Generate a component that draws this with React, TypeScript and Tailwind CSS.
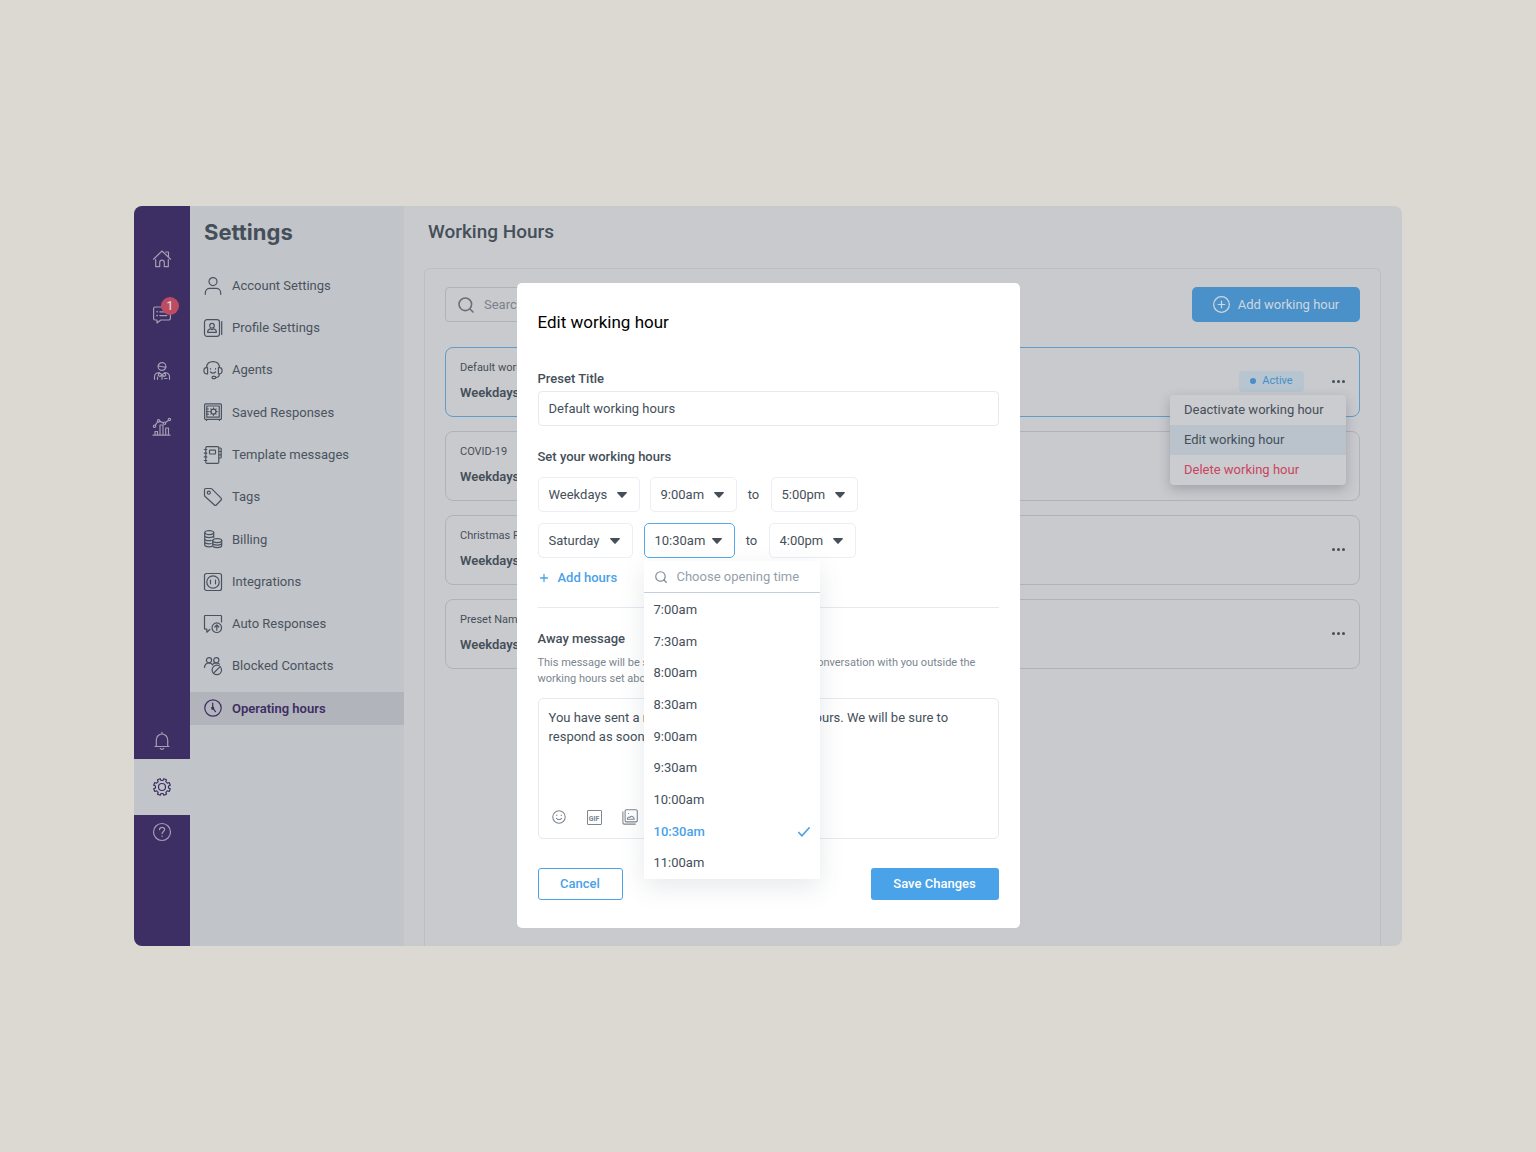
import React from "react";

type IconProps = { children: React.ReactNode; size?: string; box?: string; width?: number };

function Icon({ children, size = "size-[18px]", box = "0 0 18 18", width = 1 }: IconProps) {
  return (
    <svg
      className={size + " shrink-0 overflow-visible"}
      viewBox={box}
      fill="none"
      stroke="currentColor"
      strokeWidth={width}
      strokeLinecap="round"
      strokeLinejoin="round"
      aria-hidden="true"
    >
      {children}
    </svg>
  );
}

const HomeIcon = () => (
  <Icon width={1.200}>
    <path d="M.5 9.2 9 1l8.500 8.200M12.500 2h3v4.800M2.700 9.500v7.200h4v-4.200c0-1.600.8-2.300 2.300-2.300s2.300.7 2.300 2.300v4.200h4V9.500" />
  </Icon>
);
const ChatIcon = () => (
  <Icon width={1.200}>
    <path d="M11 1H2C1.200 1 .6 1.600.6 2.400v10.200c0 .8.6 1.400 1.400 1.400h2v3l3.800-3h8.200c.8 0 1.400-.6 1.400-1.400V7M6.800 5.800h5M6.800 9.600h7" />
    <path d="M4 5.800h.2M4 9.600h.2" strokeWidth="1.6" />
  </Icon>
);
const StaffIcon = () => (
  <Icon width={1.200}>
    <circle cx="9" cy="4.500" r="3.900" />
    <path d="M5.300 3.800c2 .3 3 1.500 7.500 1.200M1.500 17.300v-2.500c0-2.600 1.800-4 4.500-4.300l3 2.300 3-2.300c2.700.3 4.500 1.700 4.500 4.300v2.500M6 10.500 5.300 13.500 7 14.500 9 12.800l2 1.700 1.700-1-.7-3M9 13v4.300M4.500 15v2.300M11.500 16.500h2.500" />
  </Icon>
);
const ChartIcon = () => (
  <Icon width={1.200}>
    <path d="M0 17.200h17M2 17v-3.500h2.500V17M7 17V7h3v10M12.700 17v-7h2.800v7M2.400 7.200l2.300-3.500M6.700 3.400l3.800 1.500M12.500 4.400l2.800-2" />
    <circle cx="1.600" cy="8.200" r="1.200" />
    <circle cx="5.600" cy="2.900" r="1.200" />
    <circle cx="11.500" cy="5.200" r="1.200" />
    <circle cx="16.400" cy="1.500" r="1.200" />
  </Icon>
);
const BellIcon = () => (
  <Icon width={1.200}>
    <path d="M9 .3v1.500M2 14.500h14M3.300 14.500V8a5.700 6 0 0 1 11.400 0v6.500M7.300 16.500a1.800 1.200 0 0 0 3.400 0" />
  </Icon>
);
const GearIcon = () => (
  <Icon width={1.2}>
    <circle cx="9" cy="9" r="3.500" />
    <path d="M7.200.7 8 2.500h2L10.800.7l2.700 1.100-.7 1.900 1.500 1.500 1.900-.7 1.100 2.700L15.500 8v2l1.800.8-1.100 2.700-1.900-.7-1.500 1.500.7 1.900-2.700 1.100L10 15.500H8l-.8 1.800-2.700-1.100.7-1.900-1.500-1.500-1.900.7-1.100-2.700L2.500 10V8L.7 7.200l1.100-2.700 1.900.7 1.500-1.500-.7-1.900z" />
  </Icon>
);
const HelpIcon = () => (
  <Icon width={1.200}>
    <circle cx="9" cy="9" r="8.500" />
    <path d="M6.500 6.600c.1-1.500 1.200-2.300 2.600-2.300s2.500.9 2.500 2.200c0 1.900-2.500 2-2.500 4.200" />
    <path d="M9.100 13.200v.1" strokeWidth="1.500" />
  </Icon>
);

const UserIcon = () => (
  <Icon width={1.200}>
    <circle cx="9" cy="4.600" r="4" />
    <path d="M1.300 17.300v-1.500A4.500 4.500 0 0 1 5.800 11.300h6.400a4.500 4.500 0 0 1 4.500 4.500v1.500" />
  </Icon>
);
const ProfileIcon = () => (
  <Icon width={1.200}>
    <rect x=".5" y=".7" width="15" height="16.600" rx="2.500" />
    <path d="M17.700 2.500v13" />
    <circle cx="8" cy="6.700" r="2.300" />
    <path d="M3.600 13.300c0-2 1-2.900 2.500-3.500l1.900 1 1.900-1c1.500.6 2.500 1.500 2.500 3.500z" />
  </Icon>
);
const AgentIcon = () => (
  <Icon width={1.200}>
    <path d="M2.500 6.500C2.800 2.800 5.500.6 9 .6s6.200 2.200 6.500 5.900M3.600 6.500v6.300H2.200A2.200 2.200 0 0 1 0 10.600V9A2.400 2.400 0 0 1 2.400 6.600zM14.400 6.500v6.300h1.400a2.200 2.200 0 0 0 2.200-2.200V9a2.400 2.400 0 0 0-2.400-2.400zM15.300 13c0 2-1.300 3.500-3.500 3.500M6.500 11c1.400 1.300 3.600 1.300 5 0M6.500 7.500v.6M11.500 7.500v.6" />
    <rect x="8" y="15.300" width="3.800" height="2.400" rx="1.200" />
  </Icon>
);
const SafeIcon = () => (
  <Icon width={1.200}>
    <rect x=".6" y=".8" width="16.800" height="15.600" rx="1" />
    <rect x="2.800" y="3" width="12.400" height="11.200" />
    <circle cx="9.500" cy="8.600" r="2.500" />
    <path d="M9.500 4.900v1.200M9.500 11.100v1.200M5.800 8.600H7M12 8.600h1.200M6.900 6l.8.8M11.300 10.400l.8.800M6.900 11.200l.8-.8M11.300 6.800l.8-.8M2.800 6h1.600M2.800 8.600h1.600M2.800 11.200h1.600M2.500 16.500v1M15.500 16.500v1" />
  </Icon>
);
const NotebookIcon = () => (
  <Icon width={1.200}>
    <rect x="1.800" y=".6" width="13" height="16.800" rx="1.200" />
    <rect x="5.500" y="4.200" width="6" height="3.800" rx=".5" />
    <path d="M.3 3.500h2.500M.3 7.200h2.500M.3 10.900h2.500M.3 14.500h2.500M14.800 2h1.500c.5 0 .9.400.9.900v2.600h-2.400M17.200 5.500v3.300h-2.400M17.200 8.800v2.300c0 .5-.4.900-.9.900h-1.500" />
  </Icon>
);
const TagIcon = () => (
  <Icon width={1.200}>
    <path d="M.5 1.800C.5 1 1 .5 1.800.5h5c.5 0 .9.200 1.300.6l9 9c.6.600.6 1.300 0 1.900l-4.800 5c-.6.600-1.300.6-1.900 0L1.100 8.500C.7 8.100.5 7.700.5 7.200z" />
    <circle cx="4.800" cy="4.700" r="1.500" />
  </Icon>
);
const BillingIcon = () => (
  <Icon width={1.200}>
    <ellipse cx="5.200" cy="2.600" rx="4.500" ry="2" />
    <path d="M.7 2.600v12.200c0 1.200 2 2 4.500 2 1 0 1.800-.1 2.600-.4M9.700 2.600v4.900M.7 5.600c0 1.200 2 2 4.500 2s4.500-.8 4.500-2M.7 8.700c0 1.200 2 2 4.500 2 .8 0 1.500-.1 2-.3M.7 11.800c0 1.200 2 2 4.500 2 .8 0 1.500-.1 2-.3" />
    <ellipse cx="13.200" cy="10.600" rx="4.500" ry="2" />
    <path d="M8.700 10.600v5c0 1.200 2 2 4.500 2s4.500-.8 4.500-2v-5M8.700 13.100c0 1.200 2 2 4.500 2s4.500-.8 4.500-2" />
  </Icon>
);
const SocketIcon = () => (
  <Icon width={1.200}>
    <rect x=".5" y=".5" width="17" height="17" rx="2" />
    <circle cx="9" cy="9" r="6.200" />
    <path d="M6.500 7.200v3.600M11.500 7.200v3.600" />
  </Icon>
);
const AutoIcon = () => (
  <Icon width={1.200}>
    <path d="M17.500 7V1.200c0-.4-.3-.7-.7-.7H1.200c-.4 0-.7.300-.7.700v12.300c0 .4.3.7.7.7h1.600v3l3-2.700" />
    <circle cx="12.800" cy="12.700" r="4.800" />
    <path d="M12.800 15.200v-5M10.800 12l2-2 2 2" />
  </Icon>
);
const BlockedIcon = () => (
  <Icon width={1.200}>
    <circle cx="5" cy="3.200" r="2.600" />
    <circle cx="12.300" cy="3.200" r="2.600" />
    <path d="M.5 10.500c0-2.600 1.800-4.500 4.500-4.500 1.600 0 2.900.8 3.700 1.900M9 7c.9-.7 2-1 3.300-1 1.300 0 2.400.4 3.200 1.100" />
    <circle cx="12.800" cy="12.900" r="4.700" />
    <path d="m9.700 16 6.200-6.200" />
  </Icon>
);
const ClockIcon = () => (
  <Icon width={1.200}>
    <circle cx="9" cy="9" r="8.200" />
    <path d="M8.700 4v5.200l2.800 3.500" />
    <circle cx="8.700" cy="9.200" r="1" />
  </Icon>
);
const SearchIcon = ({ size }: { size: string }) => (
  <Icon size={size} box="0 0 16 16" width={1.600}>
    <circle cx="7.300" cy="7.300" r="6.300" />
    <path d="m12 12 3 3" />
  </Icon>
);
const Caret = () => (
  <svg viewBox="0 0 10 6" className="h-[6px] w-[10px] shrink-0 fill-[#454f59]" aria-hidden="true">
    <path d="M.6 0h8.800c.5 0 .7.500.4.900L5.600 5.600c-.3.400-.9.400-1.200 0L.2.900C-.1.500.1 0 .6 0z" />
  </svg>
);

const navItems = [
  { label: "Account Settings", icon: <UserIcon /> },
  { label: "Profile Settings", icon: <ProfileIcon /> },
  { label: "Agents", icon: <AgentIcon /> },
  { label: "Saved Responses", icon: <SafeIcon /> },
  { label: "Template messages", icon: <NotebookIcon /> },
  { label: "Tags", icon: <TagIcon /> },
  { label: "Billing", icon: <BillingIcon /> },
  { label: "Integrations", icon: <SocketIcon /> },
  { label: "Auto Responses", icon: <AutoIcon /> },
  { label: "Blocked Contacts", icon: <BlockedIcon /> },
  { label: "Operating hours", icon: <ClockIcon />, active: true },
];

const presets = ["Default working hours", "COVID-19", "Christmas Period", "Preset Name"];
const times = ["7:00am", "7:30am", "8:00am", "8:30am", "9:00am", "9:30am", "10:00am", "10:30am", "11:00am"];

function Rail() {
  const link = "flex w-full items-center justify-center";
  return (
    <nav aria-label="Main" className="flex w-14 shrink-0 flex-col bg-[#3d2e63] pt-[25px] text-[#a39fb4]">
      <a href="#home" aria-label="Home" className={link + " h-14"}><HomeIcon /></a>
      <a href="#chats" aria-label="Chats" className={link + " relative h-14"}>
        <ChatIcon />
        <span className="absolute top-[10px] right-[11px] flex size-[18px] items-center justify-center rounded-full bg-[#bd4c62] text-[12px] font-medium text-[#d9d3da]">1</span>
      </a>
      <a href="#team" aria-label="Team" className={link + " h-14"}><StaffIcon /></a>
      <a href="#reports" aria-label="Reports" className={link + " h-14"}><ChartIcon /></a>
      <a href="#alerts" aria-label="Notifications" className={link + " mt-auto h-9"}><BellIcon /></a>
      <a href="#settings" aria-label="Settings" className={link + " h-14 bg-[#c1c4c9] text-[#3d2e63]"}><GearIcon /></a>
      <a href="#help" aria-label="Help" className={link + " mb-[97px] h-[34px]"}><HelpIcon /></a>
    </nav>
  );
}

function SettingsNav() {
  return (
    <aside className="w-[214px] shrink-0 bg-[#c1c4c9]">
      <h1 className="px-3.5 pt-[10px] font-['Inter',sans-serif] text-[22px] leading-8 font-bold text-[#454f59]">Settings</h1>
      <nav aria-label="Settings" className="mt-[21px] flex h-[456px] flex-col justify-between">
        {navItems.map((item) => (
          <a
            key={item.label}
            href="#section"
            className={
              item.active
                ? "flex h-[33px] items-center gap-2.5 bg-[#b1b4bb] pl-3.5 font-semibold text-[#3d2e63]"
                : "flex h-[33px] items-center gap-2.5 pl-3.5 text-[#4a535e]"
            }
          >
            {item.icon}
            {item.label}
          </a>
        ))}
      </nav>
    </aside>
  );
}

function PresetCard({ title, first, menu }: { title: string; first?: boolean; menu?: boolean }) {
  return (
    <article
      className={
        first
          ? "relative flex h-[70px] items-center rounded-lg border border-[#5e9cc9] px-3.5 pb-[2px]"
          : "relative flex h-[70px] items-center rounded-lg border border-[#b0b2b7] px-3.5 pb-[2px]"
      }
    >
      <div className="flex flex-1 flex-col gap-1.5 text-[#454f59]">
        <h3 className="text-[11px] leading-[18px]">{title}</h3>
        <p className="leading-5 font-semibold">Weekdays</p>
      </div>
      {menu && (
        <span className="mr-7 flex h-[21px] w-[65px] items-center justify-center gap-1.5 rounded-sm bg-[#b7c5d0] text-[11px] text-[#468fca]">
          <span className="size-[6px] rounded-full bg-[#468fca]" />
          Active
        </span>
      )}
      {title !== "COVID-19" && (
        <button type="button" aria-label={"Options for " + title} className="flex h-6 items-center gap-[2px]">
          <span className="size-[3px] rounded-full bg-[#454f59]" />
          <span className="size-[3px] rounded-full bg-[#454f59]" />
          <span className="size-[3px] rounded-full bg-[#454f59]" />
        </button>
      )}
      {menu && (
        <div role="menu" className="absolute top-[47px] right-[13px] z-10 flex w-44 flex-col overflow-hidden rounded-sm bg-[#cbccd0] whitespace-nowrap text-[#454f59] shadow-[0_4px_12px_rgba(60,65,80,0.3)]">
          <button type="button" role="menuitem" className="h-[30px] px-3.5 text-left">Deactivate working hour</button>
          <button type="button" role="menuitem" className="h-[30px] bg-[#bac3cc] px-3.5 text-left">Edit working hour</button>
          <button type="button" role="menuitem" className="h-[30px] px-3.5 text-left text-[#ca4460]">Delete working hour</button>
        </div>
      )}
    </article>
  );
}

function Main() {
  return (
    <main className="flex min-w-0 flex-1 flex-col bg-[#c9cace] pr-[21px] pl-5">
      <h2 className="pt-3 pl-1 text-[19px] leading-7 font-medium text-[#454f59]">Working Hours</h2>
      <section className="mt-[22px] flex-1 rounded-t-md border border-b-0 border-[#bcbec3] px-5 pt-[18px]">
        <div className="flex justify-between">
          <label className="flex h-[35px] w-64 items-center gap-2.5 rounded-sm border border-[#b0b2b7] px-3 text-[#66717c]">
            <SearchIcon size="size-4" />
            <input type="search" aria-label="Search" placeholder="Search" className="min-w-0 flex-1 bg-transparent outline-none placeholder:text-[#79838d]" />
          </label>
          <button type="button" className="flex h-[35px] w-[168px] items-center justify-center gap-2 rounded-[5px] bg-[#4a90c9] text-[#cfd7df]">
            <Icon size="size-[17px]" width={1.300}>
              <circle cx="9" cy="9" r="8.300" />
              <path d="M9 5.500v7M5.500 9h7" />
            </Icon>
            Add working hour
          </button>
        </div>
        <div className="mt-[25px] flex flex-col gap-3.5">
          {presets.map((title, i) => (
            <PresetCard key={title} title={title} first={i === 0} menu={i === 0} />
          ))}
        </div>
      </section>
    </main>
  );
}

function SelectBox({ label, value, options, width }: { label: string; value: string; options: string[]; width: string }) {
  return (
    <div className={"grid h-[35px] items-center rounded-[5px] border border-[#ecedf5] " + width}>
      <select aria-label={label} defaultValue={value} className="col-start-1 row-start-1 h-full w-full appearance-none bg-transparent pl-2.5 outline-none">
        {options.map((o) => (
          <option key={o}>{o}</option>
        ))}
      </select>
      <span className="pointer-events-none col-start-1 row-start-1 mr-3 flex justify-self-end">
        <Caret />
      </span>
    </div>
  );
}

function TimeMenu() {
  return (
    <div className="absolute top-[38px] left-0 z-10 w-44 bg-white shadow-[0_8px_24px_rgba(60,70,90,0.12)]">
      <label className="flex h-8 items-center gap-2.5 border-b border-[#c3cfdf] px-[11px] text-[#7f8b97]">
        <SearchIcon size="size-3" />
        <input type="text" aria-label="Choose opening time" placeholder="Choose opening time" className="min-w-0 flex-1 outline-none placeholder:text-[#959fab]" />
      </label>
      <div role="listbox" aria-label="Opening time" className="flex h-[286px] flex-col pt-px">
        {times.map((t) => (
          <button
            key={t}
            type="button"
            role="option"
            aria-selected={t === "10:30am"}
            className={
              t === "10:30am"
                ? "flex flex-1 items-center justify-between px-2.5 font-medium text-[#4aa2e8]"
                : "flex flex-1 items-center px-2.5"
            }
          >
            {t}
            {t === "10:30am" && (
              <Icon size="h-[10px] w-3" box="0 0 12 10" width={1.700}>
                <path d="M.8 5.500 4 8.800 11.200.8" />
              </Icon>
            )}
          </button>
        ))}
      </div>
    </div>
  );
}

function EditDialog() {
  return (
    <form role="dialog" aria-label="Edit working hour" className="flex w-[503px] flex-col rounded-[5px] bg-white px-[21px] pt-[27px] pb-7 text-[#454f59]">
      <h2 className="text-[17px] leading-6 text-black">Edit working hour</h2>
      <label htmlFor="preset" className="mt-[35px] leading-5 font-medium">Preset Title</label>
      <input id="preset" defaultValue="Default working hours" className="mt-[2px] h-[35px] rounded-sm border border-[#e6e9f0] px-2.5 outline-none" />
      <h3 className="mt-[21px] leading-5 font-medium">Set your working hours</h3>
      <div className="mt-[10px] flex items-center">
        <SelectBox label="Days" value="Weekdays" options={["Weekdays", "Saturday", "Sunday"]} width="w-[102px]" />
        <div className="ml-2.5 flex items-center">
          <SelectBox label="Opens" value="9:00am" options={times} width="w-[87px]" />
          <span className="w-[34px] text-center">to</span>
          <SelectBox label="Closes" value="5:00pm" options={["4:00pm", "5:00pm"]} width="w-[87px]" />
        </div>
      </div>
      <div className="mt-[11px] flex items-center">
        <SelectBox label="Days" value="Saturday" options={["Weekdays", "Saturday", "Sunday"]} width="w-[95px]" />
        <div className="relative ml-[11px]">
          <button type="button" aria-haspopup="listbox" aria-expanded="true" className="flex h-[35px] w-[91px] items-center justify-between rounded-[5px] border border-[#55a9ea] pr-3 pl-2.5">
            10:30am
            <Caret />
          </button>
          <TimeMenu />
        </div>
        <span className="w-[34px] text-center">to</span>
        <SelectBox label="Closes" value="4:00pm" options={["4:00pm", "5:00pm"]} width="w-[87px]" />
      </div>
      <button type="button" className="mt-[10px] flex items-center gap-2.5 self-start pl-[2px] leading-5 font-medium text-[#4aa2e8]">
        <Icon size="size-2" box="0 0 8 8" width={1.300}>
          <path d="M4 .5v7M.5 4h7" />
        </Icon>
        Add hours
      </button>
      <hr className="mt-[19px] border-[#e6e9f0]" />
      <label htmlFor="away" className="mt-[21px] leading-5 font-medium">Away message</label>
      <p className="mt-[6px] text-[11px] leading-4 text-[#7b8690]">
        This message will be sent to any customer who starts a conversation with you outside the
        <br />
        working hours set above
      </p>
      <div className="mt-[11px] flex h-[141px] flex-col rounded-[5px] border border-[#e6e9f0]">
        <textarea
          id="away"
          className="min-h-0 flex-1 resize-none overflow-hidden px-2.5 pt-[9px] leading-[19px] outline-none"
          defaultValue={"You have sent a message out of our working hours. We will be sure to\nrespond as soon as possible"}
        />
        <div className="flex items-center gap-5 px-3 pb-[13px] text-[#7b8690]">
          <button type="button" aria-label="Emoji">
            <Icon size="size-4" width={1.200}>
              <circle cx="9" cy="9" r="7" />
              <path d="M6 10.500c1.300 2 4.700 2 6 0M6.500 6.800v.4M11.500 6.800v.4" />
            </Icon>
          </button>
          <button type="button" aria-label="GIF" className="flex size-[15px] items-end justify-center rounded-[1px] border border-current text-[7px] leading-[9px] font-bold">
            GIF
          </button>
          <button type="button" aria-label="Image">
            <Icon size="size-4" width={1.200}>
              <rect x="3.500" y=".8" width="13.700" height="13.700" rx="1.500" />
              <path d="M1 3v12.500c0 .8.6 1.500 1.500 1.500H15M6 11.500c0-2 1.500-3 3-2 .8-2.300 4.700-1.500 4.700 2zM7.300 5v.1" />
            </Icon>
          </button>
        </div>
      </div>
      <div className="mt-[29px] flex justify-between font-medium">
        <button type="button" className="h-8 w-[85px] rounded-[3px] border border-[#4aa2e8] text-[#4aa2e8]">Cancel</button>
        <button type="submit" className="h-8 w-32 rounded-[3px] bg-[#4aa2e8] text-white">Save Changes</button>
      </div>
    </form>
  );
}

export default function App() {
  return (
    <div className="flex min-h-screen items-center bg-[#dcd9d3] px-[134px] font-['Roboto',sans-serif] text-[13px]">
      <div className="relative flex min-h-[740px] flex-1 overflow-hidden rounded-lg">
        <Rail />
        <SettingsNav />
        <Main />
        <div className="absolute inset-0 z-20 flex items-start justify-center pt-[77px]">
          <EditDialog />
        </div>
      </div>
    </div>
  );
}
